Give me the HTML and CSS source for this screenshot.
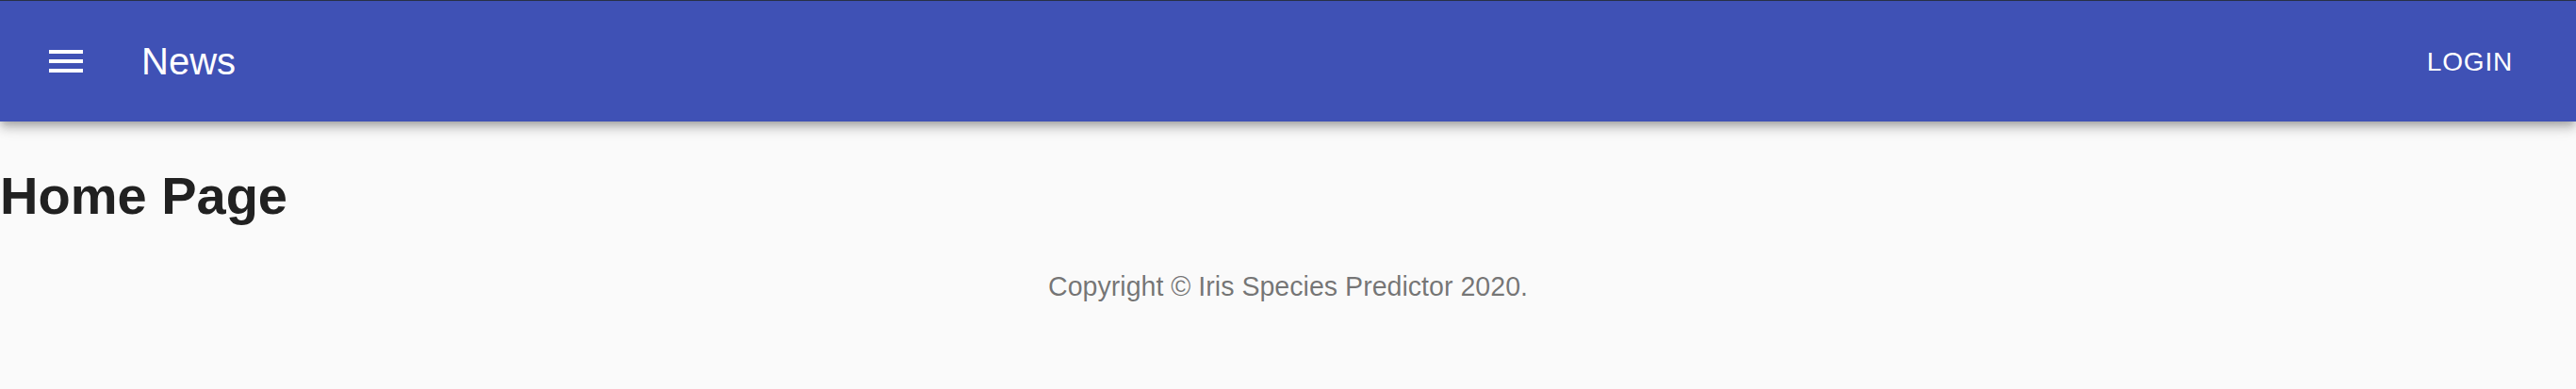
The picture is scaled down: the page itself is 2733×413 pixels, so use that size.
FILE: index.html
```html
<!DOCTYPE html>
<html lang="en">
	<head>
		<meta charset="UTF-8" />
		<meta name="viewport" content="width=device-width, initial-scale=1.0" />
		<title>Iris Species Predictor</title>
		<link rel="stylesheet" href="styles.css">
	</head>
	<body>
		<header class="app-bar">
			<div class="toolbar">
				<button class="menu-btn" aria-label="menu">
					<svg class="menu-icon" viewBox="0 0 24 24" width="48" height="48">
						<path d="M3 18h18v-2H3v2zm0-5h18v-2H3v2zm0-7v2h18V6H3z" fill="currentColor" />
					</svg>
				</button>
				<div class="toolbar-title">News</div>
				<button class="login-btn">Login</button>
			</div>
		</header>

		<main class="content">
			<h1 class="page-title">Home Page</h1>

			<!-- Footer -->
			<p class="copyright">Copyright © Iris Species Predictor 2020.</p>
		</main>
	</body>
</html>
```

FILE: styles.css
```css
body {
	margin: 0;
	background-color: #fafafa;
	font-family: 'Liberation Sans', Arial, Helvetica, sans-serif;
	color: rgba(0, 0, 0, 0.87);
}

.app-bar {
	background-color: #3f51b5;
	color: white;
	border-top: 1px solid #283046;
	box-shadow: 0 4px 8px -2px rgba(0, 0, 0, 0.2), 0 8px 10px 0 rgba(0, 0, 0, 0.14), 0 2px 20px 0 rgba(0, 0, 0, 0.12);
}

.toolbar {
	display: flex;
	align-items: center;
	height: 128px;
	padding: 0 51px 0 46px;
}

.menu-btn {
	display: flex;
	padding: 24px;
	margin: 0 32px 0 -24px;
	background: none;
	border: none;
	color: white;
	cursor: pointer;
}

.menu-icon {
	display: block;
}

.toolbar-title {
	flex-grow: 1;
	font-size: 40px;
	line-height: 64px;
}

.login-btn {
	padding: 12px 16px;
	background: none;
	border: none;
	color: white;
	font-family: inherit;
	font-size: 28px;
	line-height: 1.75;
	letter-spacing: 0.8px;
	text-transform: uppercase;
	cursor: pointer;
}

.content {
	padding-top: 46px;
}

.page-title {
	margin: 0;
	font-size: 56px;
	font-weight: bold;
	color: #212121;
}

.copyright {
	margin: 44px 0 0;
	text-align: center;
	font-size: 28.6px;
	line-height: 40px;
	color: rgba(0, 0, 0, 0.54);
}
```
